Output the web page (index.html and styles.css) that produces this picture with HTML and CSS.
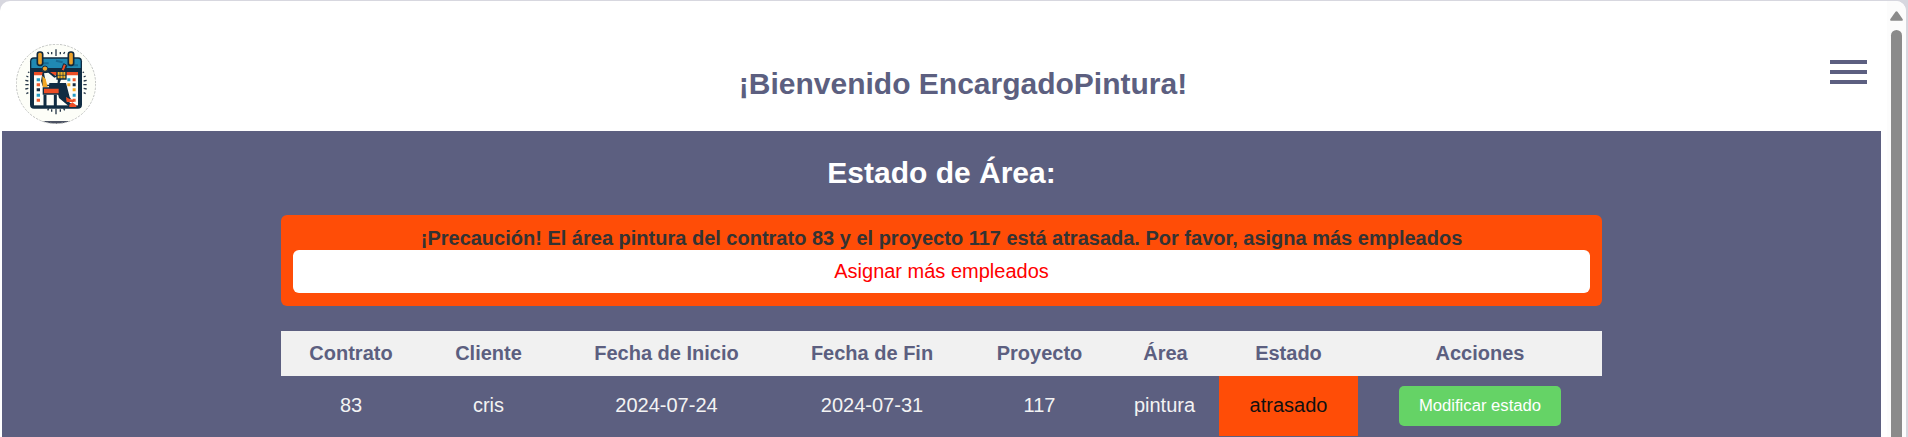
FILE: index.html
```html
<!DOCTYPE html>
<html lang="es">
<head>
<meta charset="utf-8">
<title>Estado de Área</title>
<link rel="stylesheet" href="styles.css">
</head>
<body>
<div class="window">
  <div class="page">
    <header class="header">
      <svg class="logo" viewBox="0 0 240 240" aria-hidden="true">
        <defs><clipPath id="round"><circle cx="120" cy="120" r="119"/></clipPath></defs>
        <g clip-path="url(#round)">
          <rect width="240" height="240" fill="#fdfef8"/>
          <rect y="231" width="240" height="9" fill="#4c5263"/>
        </g>
        <circle cx="120" cy="120" r="119" fill="none" stroke="#c2c4c2" stroke-width="3" stroke-dasharray="7 4"/>
        <g stroke="#29394a" stroke-width="4" fill="none">
          <path d="M120 16v20M107 24v7M133 24v7M95 24l3 6M146 24l-3 6M120 194v17M107 196v7M133 196v7M95 199l3-6M146 199l-3-6"/>
          <path d="M28 122h10M28 109l9 2M28 135l9-2M31 96l6 3M31 149l6-3M36 84l4 2M202 122h10M203 111l9-2M203 133l9 2M203 99l6-3M203 146l6 3M200 86l4-2"/>
        </g>
        <rect x="42" y="40" width="156" height="154" rx="12" fill="#102c42"/>
        <path d="M46 72V52q0-8 8-8h132q8 0 8 8v20z" fill="#2089b3"/>
        <path d="M75 58h23M120 50l20 5M152 64h34" stroke="#176b93" stroke-width="6"/>
        <rect x="54" y="84" width="132" height="100" fill="#fdfef8"/>
        <path d="M54 84h132v10H54z" fill="#ed4e25"/>
        <g fill="#249cc5"><path d="M62 103h10v9H62zM154 103h9v9h-9zM62 149h10v9H62zM170 149h9v9h-9z"/></g>
        <g fill="#f15a2b"><path d="M62 118h10v9H62zM170 103h9v9h-9zM62 164h10v9H62zM170 164h9v9h-9z"/></g>
        <g fill="#172d42"><path d="M62 133h10v9H62zM170 118h9v9h-9z"/></g>
        <g fill="#f9ad24"><path d="M154 118h9v9h-9zM170 133h9v9h-9z"/></g>
        <g fill="#eea22b" stroke="#12283b" stroke-width="5"><rect x="64" y="24" width="16" height="40" rx="7"/><rect x="157" y="24" width="16" height="40" rx="7"/></g>
        <path d="M80 84l18-3 20 14 13-10 15-25 8 6-17 36-10 25-47-1-5-15z" fill="#102c42"/>
        <path d="M84 88l13-2 18 15 12-5-3 26H91z" fill="#f8fbf4"/>
        <circle cx="87" cy="74" r="8" fill="#eea22b" stroke="#102c42" stroke-width="3"/>
        <path d="M79 95l10 10 6 25H80z" fill="#f3a824"/>
        <path d="M136 78l7-19 8 4-7 19z" fill="#ed4e25" stroke="#102c42" stroke-width="3"/>
        <path d="M123 82h27v23h-27z" fill="#f3b526" stroke="#102c42" stroke-width="4"/>
        <path d="M132 82v23M141 82v23M123 94h27" stroke="#102c42" stroke-width="2"/>
        <path d="M100 117h50l11 42 4 6-14 2 20 17-6 8-36-30-6-24H98z" fill="#102c42"/>
        <path d="M82 132h48v18H82z" fill="#ed4e25" stroke="#102c42" stroke-width="4"/>
        <path d="M87 152v34M118 152v34" stroke="#102c42" stroke-width="9"/>
        <path d="M150 159l11 6 13 3v6h-22zM160 182l9-7 12 9v5h-21z" fill="#ed4e25"/>
      </svg>
      <h1 class="welcome">¡Bienvenido EncargadoPintura!</h1>
      <button class="menu" aria-label="Menú"><span class="bar"></span><span class="bar"></span><span class="bar"></span></button>
    </header>
    <main class="main">
      <h2 class="title">Estado de Área:</h2>
      <section class="alert">
        <strong class="alert-text">¡Precaución! El área pintura del contrato 83 y el proyecto 117 está atrasada. Por favor, asigna más empleados</strong>
        <a class="assign">Asignar más empleados</a>
      </section>
      <table class="areas">
        <colgroup><col class="c1"><col class="c2"><col class="c3"><col class="c4"><col class="c5"><col class="c6"><col class="c7"><col class="c8"></colgroup>
        <thead><tr><th>Contrato</th><th>Cliente</th><th>Fecha de Inicio</th><th>Fecha de Fin</th><th>Proyecto</th><th>Área</th><th>Estado</th><th>Acciones</th></tr></thead>
        <tbody><tr><td>83</td><td>cris</td><td>2024-07-24</td><td>2024-07-31</td><td>117</td><td class="area">pintura</td><td class="late">atrasado</td><td class="actions"><button class="edit">Modificar estado</button></td></tr></tbody>
      </table>
    </main>
  </div>
  <div class="scrollbar">
    <svg class="arrow" viewBox="0 0 13 10" aria-hidden="true"><path d="M5.3 1Q6.5-.6 7.7 1L12.6 8Q13.3 9.7 12 9.8H1Q-.3 9.7.4 8z"/></svg>
    <div class="thumb"></div>
  </div>
</div>
</body>
</html>
```
FILE: styles.css
```css
* { box-sizing: border-box; }
html, body { height: 100%; margin: 0; overflow: hidden; }
body { padding: 1px 2px 0 0; background: #d7d7df; font-family: Arial, "Liberation Sans", sans-serif; font-size: 20px; }
.window { display: flex; height: 436px; overflow: hidden; border-radius: 10px 10px 0 0; background: #fff; }
.page { flex: 1; padding: 0 6px 0 2px; }
.header { display: flex; justify-content: space-between; height: 130px; padding: 43px 14px 0 14px; }
.logo { width: 80px; height: 80px; }
.welcome { margin: 23px 0 0; font-size: 30px; line-height: 34px; color: #5c5f80; }
.menu { display: flex; flex-direction: column; gap: 6px; width: 37px; height: 24px; margin-top: 16px; padding: 0; border: 0; background: none; }
.bar { width: 37px; height: 4px; background: #5c5f80; }
.main { height: 306px; padding: 25px 279px 0; overflow: hidden; background: #5c5f80; color: #fff; text-align: center; }
.title { margin: 0 0 25px; font-size: 30px; line-height: 34px; }
.alert { height: 91px; padding: 12px 12px 0; border-radius: 6px; background: #ff4d07; color: #333; }
.alert-text { display: block; height: 23px; line-height: 23px; white-space: nowrap; }
.assign { display: block; height: 43px; border-radius: 6px; background: #fff; color: #f00; line-height: 43px; }
.areas { width: 1321px; margin-top: 25px; border-collapse: collapse; table-layout: fixed; }
.c1 { width: 140px; }
.c2 { width: 135px; }
.c3 { width: 221px; }
.c4 { width: 190px; }
.c5 { width: 145px; }
.c6 { width: 107px; }
.c7 { width: 139px; }
.c8 { width: 244px; }
.areas th, .areas td { padding: 0; }
.areas th { height: 45px; background: #f1f1f1; color: #5c5f80; }
.areas td { height: 60px; padding-bottom: 2px; color: #f3f3f3; }
.areas .area { padding-right: 2px; }
.areas .actions { padding-bottom: 0; }
.areas .late { background: #ff4d07; color: #111; }
.edit { width: 162px; height: 40px; padding: 0; border: 0; border-radius: 5px; background: #65d366; color: #fff; font: 16.67px Arial, "Liberation Sans", sans-serif; vertical-align: middle; }
.scrollbar { display: flex; flex-direction: column; align-items: center; width: 19px; padding: 10px 0 0; background: #fcfcfc; }
.arrow { width: 13px; height: 10px; fill: #8b8b8b; }
.thumb { flex: 1; width: 11px; margin-top: 9px; border-radius: 6px 6px 0 0; background: #8b8b8b; }
```
